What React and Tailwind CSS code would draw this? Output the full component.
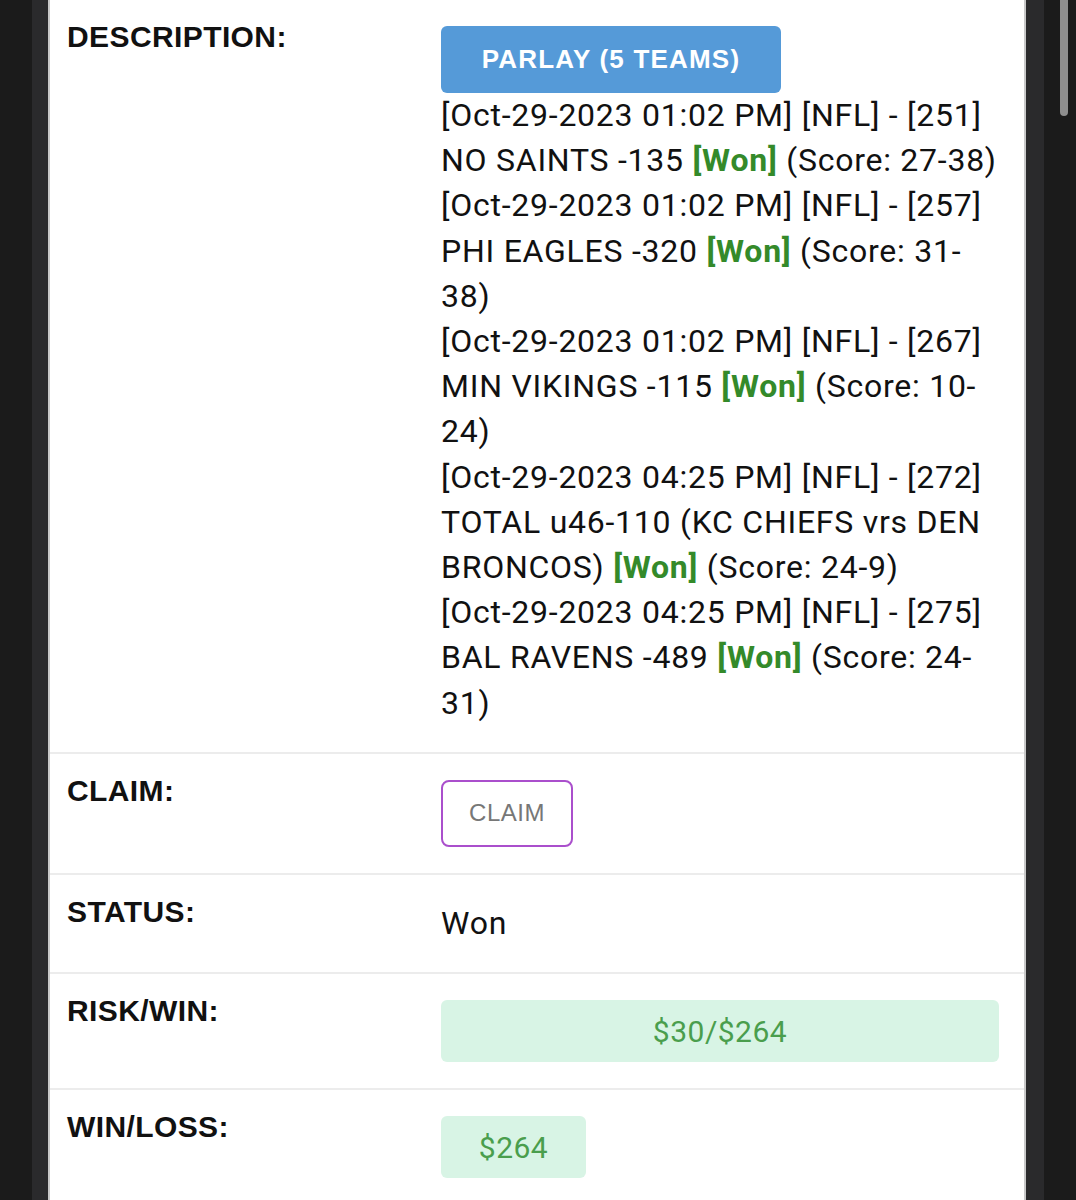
import React from "react";

const lines = [
  [{ t: "[Oct-29-2023 01:02 PM] [NFL] - [251]" }],
  [{ t: "NO SAINTS -135 " }, { t: "[Won]", won: true }, { t: " (Score: 27-38)" }],
  [{ t: "[Oct-29-2023 01:02 PM] [NFL] - [257]" }],
  [{ t: "PHI EAGLES -320 " }, { t: "[Won]", won: true }, { t: " (Score: 31-" }],
  [{ t: "38)" }],
  [{ t: "[Oct-29-2023 01:02 PM] [NFL] - [267]" }],
  [{ t: "MIN VIKINGS -115 " }, { t: "[Won]", won: true }, { t: " (Score: 10-" }],
  [{ t: "24)" }],
  [{ t: "[Oct-29-2023 04:25 PM] [NFL] - [272]" }],
  [{ t: "TOTAL u46-110 (KC CHIEFS vrs DEN" }],
  [{ t: "BRONCOS) " }, { t: "[Won]", won: true }, { t: " (Score: 24-9)" }],
  [{ t: "[Oct-29-2023 04:25 PM] [NFL] - [275]" }],
  [{ t: "BAL RAVENS -489 " }, { t: "[Won]", won: true }, { t: " (Score: 24-" }],
  [{ t: "31)" }],
];

function Row({ label, children, first }) {
  return (
    <div
      className={`grid grid-cols-[374px_558px] px-[17px] pt-[26px] pb-[26px] ${
        first ? "" : "border-t-2 border-[#ececec]"
      }`}
    >
      <div className="font-['Liberation_Sans',Arial,sans-serif] text-[30px] leading-[22px] font-bold tracking-[0.4px] text-[#111]">
        {label}
      </div>
      <div>{children}</div>
    </div>
  );
}

export default function App() {
  return (
    <div className="h-[1200px] w-[1076px] flex overflow-hidden bg-[#1b1b1b] font-['Roboto',Arial,sans-serif]">
      <div className="w-[32px] shrink-0 bg-[#1b1b1b]" />
      <div className="w-[16px] shrink-0 bg-[#2a2a2c]" />

      {/* ticket panel */}
      <div className="w-[978px] shrink-0 bg-white border-x-2 border-[#c8c8c8]">
        <Row label="DESCRIPTION:" first>
          <div className="w-[340px] h-[67px] rounded-[6px] bg-[#559ad8] flex items-center justify-center text-white font-bold text-[26px] tracking-[1.2px] font-['Liberation_Sans',Arial,sans-serif]">
            PARLAY (5 TEAMS)
          </div>
          <div className="text-[32px] leading-[45.2px] tracking-[0.75px] text-[#111]">
            {lines.map((line, i) => (
              <div key={i} className="whitespace-nowrap">
                {line.map((s, j) =>
                  s.won ? (
                    <span key={j} className="font-bold text-[#348a2a]">
                      {s.t}
                    </span>
                  ) : (
                    <span key={j}>{s.t}</span>
                  )
                )}
              </div>
            ))}
          </div>
        </Row>

        <Row label="CLAIM:">
          <button className="w-[132px] h-[67px] rounded-[8px] border-2 border-[#aa4fcc] bg-white text-[24px] text-[#777] tracking-[0.5px] font-['Liberation_Sans',Arial,sans-serif]">
            CLAIM
          </button>
        </Row>

        <Row label="STATUS:">
          <div className="text-[32px] leading-[45.2px] tracking-[0.75px] text-[#111]">Won</div>
        </Row>

        <Row label="RISK/WIN:">
          <div className="h-[62px] rounded-[6px] bg-[#d8f4e5] flex items-center justify-center text-[30px] text-[#4a9e4d] tracking-[0.5px]">
            $30/$264
          </div>
        </Row>

        <Row label="WIN/LOSS:">
          <div className="w-[145px] h-[62px] rounded-[6px] bg-[#d8f4e5] flex items-center justify-center text-[30px] text-[#4a9e4d] tracking-[0.5px]">
            $264
          </div>
        </Row>
      </div>

      <div className="w-[18px] shrink-0 bg-[#2a2a2c]" />
      <div className="relative w-[32px] shrink-0 bg-[#1b1b1b]">
        {/* scroll thumb */}
        <div className="absolute left-[16px] top-0 w-[8px] h-[116px] rounded-b-full bg-[#8e8e8e]" />
      </div>
    </div>
  );
}
